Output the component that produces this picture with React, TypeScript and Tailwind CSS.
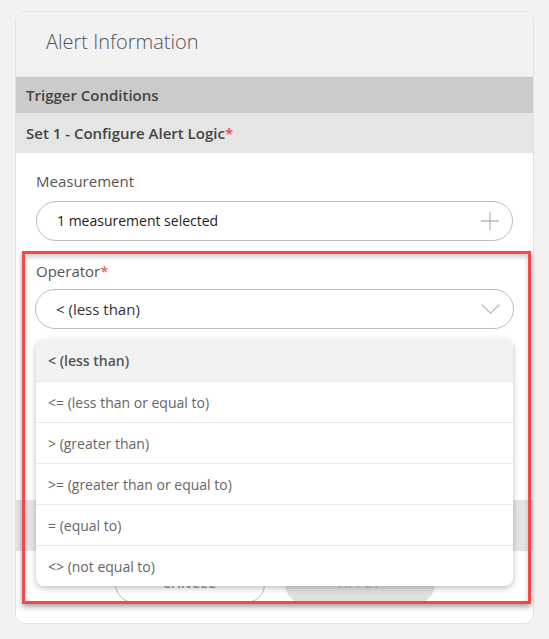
const options = [
  "< (less than)",
  "<= (less than or equal to)",
  "> (greater than)",
  ">= (greater than or equal to)",
  "= (equal to)",
  "<> (not equal to)",
];

const App = () => {
  return (
    <div
      className="min-h-[639px] bg-[#f2f2f2] px-[15px] pt-[11px] text-[#555]"
      style={{ fontFamily: '"Open Sans", "Noto Sans", sans-serif' }}
    >
      <div className="relative rounded-[10px] border border-[#e3e3e3] bg-white overflow-visible">
        <div className="h-[65px] rounded-t-[10px] bg-[#f2f2f2] border-b border-[#e6e6e6] pl-[30px] pb-[4px] flex items-center text-[20px] font-light text-[#555]">
          Alert Information
        </div>
        <div className="h-[36px] bg-[#cbcbcb] px-[10px] flex items-center text-[15px] font-semibold text-[#444]">
          Trigger Conditions
        </div>
        <div className="h-[40px] bg-[#e5e5e5] px-[10px] flex items-center text-[15px] font-semibold text-[#444]">
          Set 1 - Configure Alert Logic<span className="text-[#e64545]">*</span>
        </div>

        <div className="px-[20px] pt-[17px]">
          <div className="text-[15px] text-[#555]">Measurement</div>
          <div className="mt-[8px] h-[40px] rounded-full border border-[#bdbdbd] flex items-center justify-between pl-[20px] pr-[13px] text-[14px] text-[#222]">
            <span>1 measurement selected</span>
            <svg width="18" height="18" viewBox="0 0 18 18" className="text-[#bbb]">
              <path d="M9 0v18M0 9h18" stroke="currentColor" strokeWidth="1.3" fill="none" />
            </svg>
          </div>

          <div className="mt-[19px] text-[15px] text-[#555]">
            Operator<span className="text-[#e64545]">*</span>
          </div>
          <div className="relative mt-[7px]">
            <div className="h-[40px] -mx-[1px] rounded-full border border-[#bdbdbd] flex items-center justify-between pl-[20px] pr-[13px] text-[15px] text-[#333]">
              <span>&lt; (less than)</span>
              <svg width="19" height="10" viewBox="0 0 19 10" className="text-[#bbb]">
                <path d="M0.5 0.5L9.5 9.2L18.5 0.5" stroke="currentColor" strokeWidth="1.2" fill="none" />
              </svg>
            </div>
            <div className="absolute left-0 right-0 top-[51px] z-10 rounded-[8px] bg-white shadow-[0_2px_6px_rgba(0,0,0,0.25)] overflow-hidden">
              {options.map((o, i) => (
                <div
                  key={o}
                  className={
                    i === 0
                      ? "h-[41px] flex items-center px-[12px] bg-[#f2f2f2] text-[14px] font-semibold text-[#555]"
                      : "h-[41px] flex items-center px-[12px] border-t border-[#ececec] text-[14px] text-[#666]"
                  }
                >
                  {o}
                </div>
              ))}
            </div>
          </div>
        </div>

        <div className="mt-[171px] h-[51px] bg-[#e5e5e5]" />
        <div className="flex justify-center gap-[20px] pt-[14px] pb-[20px]">
          <div className="w-[150px] h-[38px] rounded-full border border-[#bdbdbd] flex items-center justify-center text-[13px] font-semibold tracking-wider text-[#999]">
            CANCEL
          </div>
          <div className="w-[150px] h-[38px] rounded-full bg-[#e0e0e0] flex items-center justify-center text-[13px] font-semibold tracking-wider text-[#bbb]">
            APPLY
          </div>
        </div>

        <div className="absolute left-[6px] right-[2px] top-[239px] h-[353px] z-20 border-[3px] border-[#f54848] shadow-[0_3px_5px_rgba(0,0,0,0.35),inset_0_3px_5px_rgba(0,0,0,0.2)] pointer-events-none" />
      </div>
    </div>
  );
};

export default App;
